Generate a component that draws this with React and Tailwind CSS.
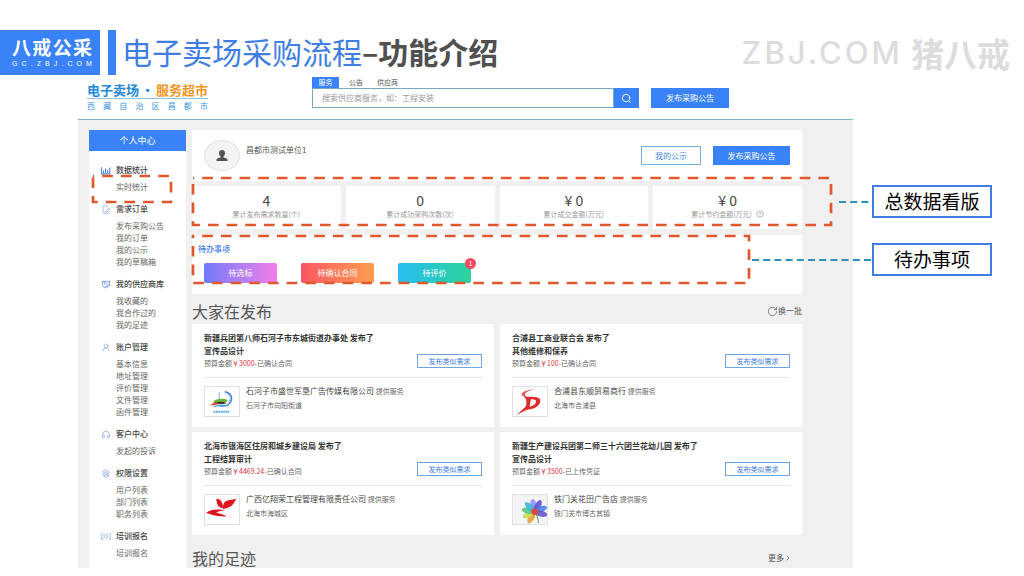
import React from "react";
import {
  ChevronRight,
  CircleHelp,
  FilePenLine,
  Handshake,
  Headphones,
  RotateCw,
  Search,
  ShieldUser,
  UserRound,
} from "lucide-react";

function BarsIcon({ className }) {
  return (
    <svg viewBox="0 0 24 18" className={className} fill="none" stroke="currentColor" strokeWidth="2.6">
      <path d="M1 1v16h22M6 15V9M11 15V4M16 15V8M21 15V2" />
    </svg>
  );
}

function TrainingIcon({ className }) {
  return (
    <svg viewBox="0 0 26 18" className={className} fill="none" stroke="currentColor" strokeWidth="1.6">
      <path d="M6 1H1v16h5M20 1h5v16h-5" />
      <circle cx="9" cy="6" r="2.5" />
      <circle cx="17" cy="6" r="2.5" />
      <path d="M4 16c1-4 3-6 5-6s3 2 4 5c1-3 2-5 4-5s4 2 5 6" />
    </svg>
  );
}

const menu = [
  { title: "数据统计", icon: BarsIcon, items: ["实时统计"], framed: true, tint: "text-[#4f7fe6]" },
  { title: "需求订单", icon: FilePenLine, items: ["发布采购公告", "我的订单", "我的公示", "我的草稿箱"] },
  { title: "我的供应商库", icon: Handshake, items: ["我收藏的", "我合作过的", "我的足迹"], tint: "text-[#5f86e0]" },
  { title: "账户管理", icon: UserRound, items: ["基本信息", "地址管理", "评价管理", "文件管理", "函件管理"] },
  { title: "客户中心", icon: Headphones, items: ["发起的投诉"] },
  { title: "权限设置", icon: ShieldUser, items: ["用户列表", "部门列表", "职务列表"] },
  { title: "培训报名", icon: TrainingIcon, items: ["培训报名"] },
];

const stats = [
  { value: "4", label: "累计发布需求数量(个)" },
  { value: "0", label: "累计成功采购次数(次)" },
  { value: "¥ 0", label: "累计成交金额(万元)" },
  { value: "¥ 0", label: "累计节约金额(万元)", help: true },
];

const todos = [
  { label: "待选标", style: "from-[#7078fb] to-[#f07de8]" },
  { label: "待确认合同", style: "from-[#fb5560] to-[#fd9c4e]" },
  { label: "待评价", style: "from-[#2bbcf0] to-[#2fd39a]", count: 1 },
];

function BoatLogo() {
  return (
    <svg viewBox="0 0 36 31" className="w-full h-full" fill="none">
      <path d="M15 5v10" stroke="#7aa7e8" strokeWidth="1" />
      <path d="M21 5c6 1 9 6 6 11-2 4-7 5-12 4" stroke="#3f7fe6" strokeWidth="1.6" />
      <path d="M23 7c4 2 5 6 2 9" stroke="#8db6f2" strokeWidth="1" />
      <path d="M9 15c5-3 11-3 15-1l-2 3c-5-1-9 0-13 1z" fill="#62b83a" />
      <path d="M5 20c4-4 9-5 14-4l4 2c-6 0-12 1-18 2z" fill="#e03a30" />
      <path d="M13 16h8l-1 2h-7z" fill="#303a2c" />
      <path d="M9 21c5-2 10-2 14-1" stroke="#41b0dc" strokeWidth="1.4" />
      <path d="M9 26.500h17" stroke="#5aa9e6" strokeWidth="2" strokeDasharray="2 .6" />
    </svg>
  );
}

function DLogo() {
  return (
    <svg viewBox="0 0 36 31" className="w-full h-full">
      <path d="M24 2C17 3 9 5 9 8c0 2 4 2 6 4-1-2-3-3-2-4.500C14 5 19 3.500 24 2z" fill="#e25a56" />
      <path
        fillRule="evenodd"
        d="M11 10.500c8 0 18-1 18 4 0 6-7 9.500-13 9.500C12 25 8 28 3 30c5-4 9-7 11-10 0-4 1-7-3-9.500zM19 13l-1.500 8c4-.5 7-3 7-6 0-1.500-2.500-2-5.500-2z"
        fill="#df2a2a"
      />
    </svg>
  );
}

function WingLogo() {
  return (
    <svg viewBox="0 0 36 31" className="w-full h-full" fill="#e0141c">
      <path d="M12 4c4 0 7 3 7 10-4 0-7-3-7-10z" />
      <path d="M33 4c-2 6-6 10-14 11 0-5 1-8 5-9 3-1 6-1 9-2z" />
      <path d="M1 19c5-4 12-4 21-3-6 1-10 2-10 3 2 1 7 1 11 4-8 0-15-1-22-4z" />
      <path d="M24 23c2 0 5 0 7 1-2 0-5 0-7-1z" fill="#f0b8b8" />
    </svg>
  );
}

const petals = [
  { angle: -100, color: "#9a8cf0" },
  { angle: -62, color: "#5b52d0" },
  { angle: -22, color: "#4a7fe6" },
  { angle: 15, color: "#6a56c8" },
  { angle: 120, color: "#e8a03a" },
  { angle: 155, color: "#c8dc50" },
  { angle: 190, color: "#5cc88a" },
  { angle: 225, color: "#3cb8d8" },
];

function FlowerLogo() {
  return (
    <svg viewBox="0 0 36 31" className="w-full h-full bg-[#f4f4f6]">
      {petals.map((p) => (
        <ellipse key={p.angle} cx="30" cy="18" rx="7" ry="3.200" fill={p.color} opacity=".9" transform={`rotate(${p.angle} 23 18)`} />
      ))}
      <circle cx="23" cy="18" r="3.500" fill="#e0483c" />
      <path d="M24 20c2 3 3 6 3 10" stroke="#4a9a3c" strokeWidth="1" fill="none" />
    </svg>
  );
}

const posts = [
  {
    buyer: "新疆兵团第八师石河子市东城街道办事处",
    subject: "宣传品设计",
    price: "3000",
    state: "已确认合同",
    seller: "石河子市盛世军垦广告传媒有限公司",
    place: "石河子市向阳街道",
    logo: BoatLogo,
  },
  {
    buyer: "合浦县工商业联合会",
    subject: "其他维修和保养",
    price: "100",
    state: "已确认合同",
    seller: "合浦县东顺贸易商行",
    place: "北海市合浦县",
    logo: DLogo,
  },
  {
    buyer: "北海市银海区住房和城乡建设局",
    subject: "工程结算审计",
    price: "4469.24",
    state: "已确认合同",
    seller: "广西亿翔荣工程管理有限责任公司",
    place: "北海市海城区",
    logo: WingLogo,
  },
  {
    buyer: "新疆生产建设兵团第二师三十六团兰花幼儿园",
    subject: "宣传品设计",
    price: "3500",
    state: "已上传凭证",
    seller: "铁门关花田广告店",
    place: "铁门关市博古其镇",
    logo: FlowerLogo,
  },
];

// Orange dashed marker drawn over a block of the page
function Marker({ className }) {
  return (
    <div className={`absolute z-10 pointer-events-none ${className}`}>
      <svg className="w-full h-full overflow-visible" fill="none">
        <rect width="100%" height="100%" stroke="#e0592e" strokeWidth="2.700" strokeDasharray="10.67 8" strokeDashoffset="-9.200" />
      </svg>
    </div>
  );
}

function Callout({ label, lineClass }) {
  return (
    <div className="relative h-[33px] border-2 border-[#3d7de4] bg-white flex items-center justify-center pb-0.5 text-[19px] leading-6 text-black">
      {label}
      <svg className={`absolute z-10 right-full top-1/2 h-0.5 -translate-y-1/2 ${lineClass}`}>
        <path d="M0 1h200" stroke="#2f90bc" strokeWidth="2" strokeDasharray="7 4.200" />
      </svg>
    </div>
  );
}

function SlideHeader() {
  return (
    <header className="flex items-start pt-[30px] pr-[14px]">
      <div className="w-[100px] h-[45px] bg-[#3a82f8] text-white pt-1 pl-3 pr-2">
        <div className="flex justify-between text-[19px] leading-[25px] font-bold">
          <span>八</span>
          <span>戒</span>
          <span>公</span>
          <span>采</span>
        </div>
        <div className="flex justify-between pt-px font-['Liberation_Sans',sans-serif] text-[7px] leading-2">
          {"GC.ZBJ.COM".split("").map((c, i) => (
            <span key={i}>{c}</span>
          ))}
        </div>
      </div>
      <div className="w-2 h-[45px] ml-2 bg-[#3a82f8]" />
      <h1 className="ml-1.5 text-[30px] leading-[42px] text-[#3f7ee2] whitespace-nowrap">
        电子卖场采购流程<span className="font-bold text-[#505050]">–功能介绍</span>
      </h1>
      <div className="ml-auto flex items-center gap-2 text-[#dcdcdc] whitespace-nowrap">
        <span className="font-['Inter',sans-serif] font-medium text-[31px] leading-[45px] tracking-widest">ZBJ.COM</span>
        <span className="text-[33px] leading-[42px] font-bold">猪八戒</span>
      </div>
    </header>
  );
}

function SiteHeader() {
  return (
    <div className="flex h-[45px] pt-0.5 border-b border-[#7fb0cc]">
      <div className="w-[234px] shrink-0 pl-[9px]">
        <div className="w-[121px] pt-[5px]">
          <p className="flex justify-between text-[13px] leading-4 font-bold text-[#2488d4] border-b border-[#8cc0e4] whitespace-nowrap">
            <span>电子卖场</span>
            <span>·</span>
            <span className="text-[#f2951f]">服务超市</span>
          </p>
          <p className="flex justify-between pt-px text-[8px] leading-3 text-[#3c94d8]">
            {"西藏自治区昌都市".split("").map((c) => (
              <span key={c}>{c}</span>
            ))}
          </p>
        </div>
      </div>
      <form className="flex-1 flex items-end pb-[11px] pr-[124px]">
        <div className="flex-1">
          <div className="flex text-[7px] leading-[11px] text-[#555]">
            <button type="button" className="w-[27px] bg-[#3a82f8] text-white">服务</button>
            <button type="button" className="ml-[10px]">公告</button>
            <button type="button" className="ml-[14px]">供应商</button>
          </div>
          <div className="flex h-5">
            <input
              type="text"
              aria-label="搜索供应商服务"
              placeholder="搜索供应商服务，如：工程安装"
              className="flex-1 min-w-0 border border-[#79a9c4] bg-white px-[9px] text-[8px] leading-3 placeholder:text-[#999] outline-none"
            />
            <button type="button" aria-label="搜索" className="w-[25px] bg-[#3a82f8] text-white flex items-center justify-center">
              <Search size={11} />
            </button>
          </div>
        </div>
        <button type="button" className="ml-3 w-[78px] h-5 bg-[#3a82f8] text-white text-[8px] leading-3">
          发布采购公告
        </button>
      </form>
    </div>
  );
}

function Sidebar() {
  return (
    <aside className="w-[97px] shrink-0 bg-white">
      <h2 className="h-[21px] bg-[#3a82f8] text-white text-[9px] leading-[21px] text-center">个人中心</h2>
      <nav className="flex flex-col gap-[10px] pt-[13px] pb-2 text-[8px] leading-3">
        {menu.map(({ title, icon: Icon, items, framed, tint }) => (
          <div key={title} className="relative">
            <h3 className="flex items-center gap-[3px] pl-3 mb-[5px] font-medium text-[#444]">
              <span className="w-3 flex">
                <Icon className={`w-[10px] h-[9px] ${tint || "text-[#8fa8e4]"}`} />
              </span>
              {title}
            </h3>
            <ul className="pl-[27px] text-[#666]">
              {items.map((item) => (
                <li key={item}>
                  <a href="#" className="block">{item}</a>
                </li>
              ))}
            </ul>
            {framed && <Marker className="left-1 right-[15px] top-3 -bottom-[9px]" />}
          </div>
        ))}
      </nav>
    </aside>
  );
}

function UserCard() {
  return (
    <section className="h-[51px] bg-white flex items-center px-3">
      <div className="w-9 h-[31px] rounded-[50%] border border-[#e2e2e2] bg-[#f4f4f4] flex items-center justify-center">
        <svg viewBox="0 0 12 11" className="w-3 h-[11px]" fill="#555">
          <path d="M6 0c2 0 3 1.300 3 3 0 1.500-.6 2.800-1.500 3.400V7.500c1.500.4 4 .9 4 2V11H.5V9.500c0-1.100 2.500-1.600 4-2V6.400C3.600 5.800 3 4.500 3 3c0-1.700 1-3 3-3z" />
        </svg>
      </div>
      <p className="ml-1.5 pb-3 text-[8px] leading-3 text-[#555]">昌都市测试单位1</p>
      <div className="ml-auto flex gap-3 text-[8px] leading-3">
        <button className="w-[60px] h-[19px] border border-[#78aede] text-[#4384d8]">我的公示</button>
        <button className="w-[77px] h-[19px] bg-[#3a82f8] text-white">发布采购公告</button>
      </div>
    </section>
  );
}

function Stats() {
  return (
    <section className="relative grid grid-cols-4 gap-[5px] mt-[5px]">
      {stats.map(({ value, label, help }) => (
        <div key={label} className="h-[43px] bg-white pt-1.5 text-center">
          <p className="text-[14px] leading-4 text-[#444]">{value}</p>
          <p className="flex items-center justify-center gap-1 text-[7px] leading-3 text-[#999]">
            {label}
            {help && <CircleHelp size={8} />}
          </p>
        </div>
      ))}
      <Marker className="left-px -right-[29px] -top-2 bottom-1" />
    </section>
  );
}

function Todos() {
  return (
    <section className="relative h-[59px] mt-1.5 bg-white pt-2">
      <h2 className="pl-1.5 text-[8px] leading-3 font-medium text-[#3f7ee2]">待办事项</h2>
      <div className="flex gap-6 mt-2 pl-3">
        {todos.map(({ label, style, count }) => (
          <button key={label} className={`relative w-[73px] h-5 rounded-xs bg-linear-to-r text-white text-[8px] leading-3 ${style}`}>
            {label}
            {count && (
              <span className="absolute -top-[5px] -right-[5px] w-[11px] h-[11px] rounded-full bg-[#f5475f] text-[7px] leading-[11px]">
                {count}
              </span>
            )}
          </button>
        ))}
      </div>
      <Marker className="left-px right-[53px] top-px bottom-[11px]" />
    </section>
  );
}

function PostCard({ post }) {
  const Logo = post.logo;
  return (
    <article className="bg-white px-3 pt-[7px] pb-[10px]">
      <div className="flex items-end justify-between pb-[7px] border-b border-[#e6e6e6]">
        <div className="text-[8px] leading-[13px] text-[#333] whitespace-nowrap">
          <h3 className="font-bold">{post.buyer} 发布了</h3>
          <p className="font-bold">{post.subject}</p>
          <p className="text-[7px] text-[#666]">
            预算金额<span className="text-[#d8343c]">￥{post.price}</span>-{post.state}
          </p>
        </div>
        <button className="w-[65px] h-[14px] mb-0.5 shrink-0 border border-[#6fa4e0] text-[#3f7ee2] text-[7px] leading-3">
          发布类似需求
        </button>
      </div>
      <div className="flex gap-1.5 mt-2">
        <div className="w-9 h-[31px] border border-[#e0e0e0]">
          <Logo />
        </div>
        <div className="text-[8px] leading-[10px] text-[#444]">
          <p>
            {post.seller} <span className="text-[7px] text-[#666]">提供服务</span>
          </p>
          <p className="mt-1 text-[7px] text-[#666]">{post.place}</p>
        </div>
      </div>
    </article>
  );
}

export default function App() {
  return (
    <div className="min-h-screen bg-white overflow-hidden font-['Noto_Sans_CJK_SC',sans-serif]">
      <SlideHeader />
      <div className="flex pl-[78px] pr-8">
        <div className="flex-1 min-w-0">
          <SiteHeader />
          <div className="flex gap-1.5 bg-[#f0f0f0] pl-[11px] pr-[51px] pt-[10px]">
            <Sidebar />
            <main className="flex-1 min-w-0">
              <UserCard />
              <Stats />
              <Todos />
              <div className="flex items-center justify-between pt-[7px] pb-[3px] leading-5 text-[#555]">
                <h2 className="text-[16px]">大家在发布</h2>
                <button className="flex items-center text-[8px]">
                  <RotateCw size={11} strokeWidth={1.5} />
                  换一批
                </button>
              </div>
              <div className="grid grid-cols-2 gap-x-1.5 gap-y-[5px]">
                {posts.map((post) => (
                  <PostCard key={post.buyer} post={post} />
                ))}
              </div>
              <div className="flex items-center justify-between pt-[13px] pr-[10px] leading-5 text-[#555]">
                <h2 className="text-[16px]">我的足迹</h2>
                <a href="#" className="flex items-center text-[8px]">
                  更多
                  <ChevronRight size={8} />
                </a>
              </div>
            </main>
          </div>
        </div>
        <div className="w-[120px] shrink-0 ml-[19px] mt-[110px] flex flex-col gap-[25px]">
          <Callout label="总数据看版" lineClass="w-[35px]" />
          <Callout label="待办事项" lineClass="w-[122px]" />
        </div>
      </div>
    </div>
  );
}
